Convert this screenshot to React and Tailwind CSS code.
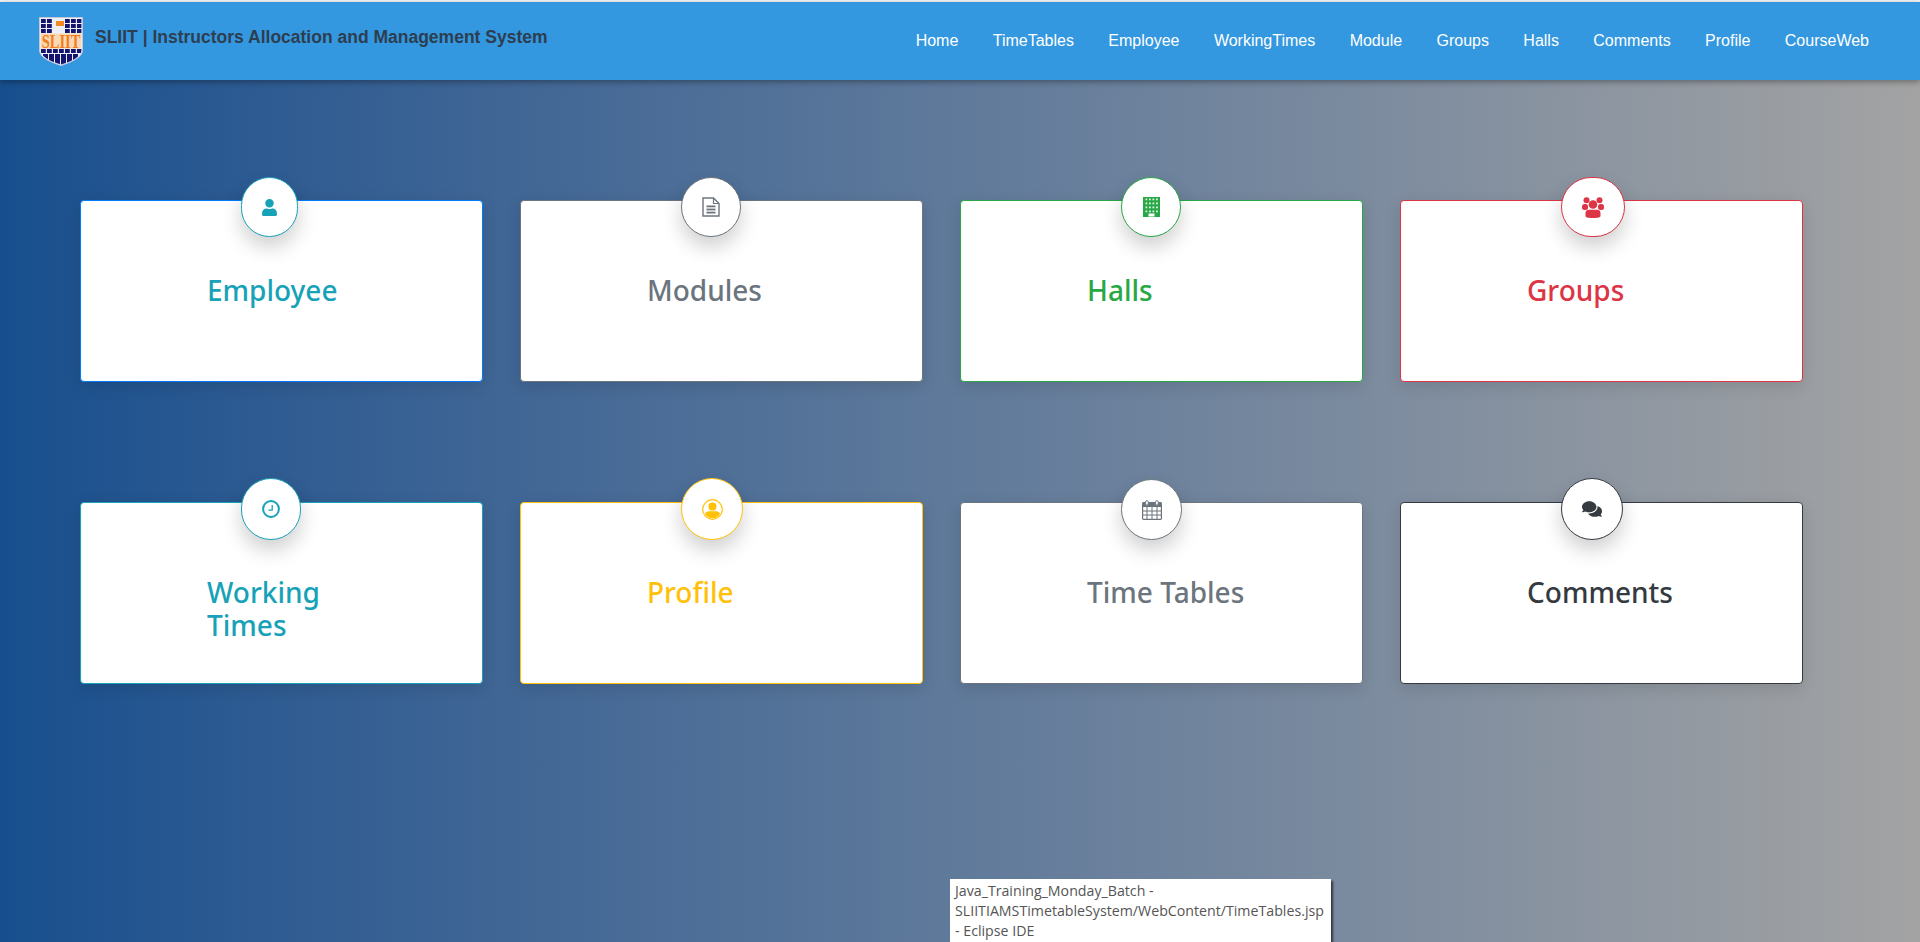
import { FaUser, FaComments } from "react-icons/fa";

const navLinks = ["Home", "TimeTables", "Employee", "WorkingTimes", "Module", "Groups", "Halls", "Comments", "Profile", "CourseWeb"];

// icons react-icons doesn't have in this shape are drawn by hand
const FileIcon = ({ className }) => (
  <svg width="18" height="20" viewBox="0 0 18 20" className={className}>
    <path d="M1 1H11.5L17 6.5V19H1Z" fill="none" stroke="currentColor" strokeWidth="1.4" />
    <path d="M11.5 1V6.5H17" fill="none" stroke="currentColor" strokeWidth="1.2" />
    <rect x="4.5" y="8.5" width="9" height="1.8" fill="currentColor" />
    <rect x="4.5" y="11.6" width="9" height="1.8" fill="currentColor" />
    <rect x="4.5" y="14.7" width="9" height="1.8" fill="currentColor" />
  </svg>
);

const BuildingIcon = ({ className }) => (
  <svg width="17" height="20" viewBox="0 0 17 20" className={className}>
    <rect width="17" height="20" fill="currentColor" />
    {[2, 6, 10, 14].map((y) =>
      [2.5, 6, 9.5, 13].map((x) => <rect key={`${x}-${y}`} x={x} y={y - 0.5} width="1.8" height="1.8" fill="#fff" fillOpacity="0.85" />)
    )}
    <rect x="5.5" y="16.5" width="6" height="3" fill="#fff" />
  </svg>
);

const GroupIcon = ({ className }) => (
  <svg width="22" height="21" viewBox="0 0 22 21" className={className}>
    <g fill="currentColor">
      <circle cx="4.5" cy="3.2" r="3" />
      <circle cx="17.5" cy="3.2" r="3" />
      <rect x="0" y="7" width="6" height="6" rx="2.5" />
      <rect x="16" y="7" width="6" height="6" rx="2.5" />
      <circle cx="11" cy="7.5" r="4.3" />
      <path d="M3.5 16C3.5 13.5 5 12.8 7 12.8H15C17 12.8 18.5 13.5 18.5 16V19C18.5 20 17 21 11 21C5 21 3.5 20 3.5 19Z" />
    </g>
  </svg>
);

const ClockIcon = ({ className }) => (
  <svg width="18" height="18" viewBox="0 0 18 18" className={className}>
    <circle cx="9" cy="9" r="7.9" fill="none" stroke="currentColor" strokeWidth="2" />
    <path d="M10.2 5V10.2H6.5" fill="none" stroke="currentColor" strokeWidth="1.3" />
  </svg>
);

const ProfileIcon = ({ className }) => (
  <svg width="21" height="21" viewBox="0 0 21 21" className={className}>
    <defs>
      <clipPath id="profile-clip">
        <circle cx="10.5" cy="10.5" r="8.7" />
      </clipPath>
    </defs>
    <circle cx="10.5" cy="10.5" r="9.8" fill="none" stroke="currentColor" strokeWidth="1.2" />
    <g fill="currentColor" clipPath="url(#profile-clip)">
      <circle cx="10.5" cy="7.6" r="4" />
      <path d="M3 21V15.5C3 13.5 5 12.3 7 12.3H14C16 12.3 18 13.5 18 15.5V21Z" />
    </g>
  </svg>
);

const CalendarIcon = ({ className }) => (
  <svg width="20" height="20" viewBox="0 0 20 20" className={className}>
    <rect x="0.6" y="2.6" width="18.8" height="16.8" rx="1" fill="#fff" stroke="currentColor" strokeWidth="1.2" />
    <rect x="0.6" y="2.6" width="18.8" height="4.4" fill="currentColor" />
    <path d="M5 7V19M10 7V19M15 7V19M1 11H19M1 15H19" stroke="currentColor" strokeWidth="1" />
    <rect x="3.6" y="0.6" width="2.6" height="4.6" rx="1.3" fill="#fff" stroke="currentColor" strokeWidth="0.9" />
    <rect x="13.6" y="0.6" width="2.6" height="4.6" rx="1.3" fill="#fff" stroke="currentColor" strokeWidth="0.9" />
  </svg>
);

const UserIcon = ({ className }) => <FaUser className={`text-[17px] ${className}`} />;
const CommentsIcon = ({ className }) => <FaComments className={`text-[20px] ${className}`} />;

// classes are written out in full so tailwind picks them up
const cards = [
  { title: "Employee", Icon: UserIcon, border: "border-[#007bff]", ring: "border-[#17a2b8]", text: "text-[#17a2b8]", circle: "w-[57px] h-[60px] -top-[24px]" },
  { title: "Modules", Icon: FileIcon, border: "border-[#6c757d]", ring: "border-[#6c757d]", text: "text-[#6c757d]", circle: "w-[60px] h-[60px] -top-[24px]" },
  { title: "Halls", Icon: BuildingIcon, border: "border-[#28a745]", ring: "border-[#28a745]", text: "text-[#28a745]", circle: "w-[60px] h-[60px] -top-[24px]" },
  { title: "Groups", Icon: GroupIcon, border: "border-[#dc3545]", ring: "border-[#dc3545]", text: "text-[#dc3545]", circle: "w-[64px] h-[60px] -top-[24px]" },
  { title: "Working Times", Icon: ClockIcon, border: "border-[#17a2b8]", ring: "border-[#17a2b8]", text: "text-[#17a2b8]", circle: "w-[60px] h-[62px] -top-[25px]" },
  { title: "Profile", Icon: ProfileIcon, border: "border-[#ffc107]", ring: "border-[#ffc107]", text: "text-[#ffc107]", circle: "w-[62px] h-[62px] -top-[25px]" },
  { title: "Time Tables", Icon: CalendarIcon, border: "border-[#6c757d]", ring: "border-[#6c757d]", text: "text-[#6c757d]", circle: "w-[61px] h-[61px] -top-[24px]" },
  { title: "Comments", Icon: CommentsIcon, border: "border-[#343a40]", ring: "border-[#343a40]", text: "text-[#343a40]", circle: "w-[62px] h-[62px] -top-[25px]" },
];

const Logo = () => (
  <svg width="44" height="49" viewBox="0 0 44 49" className="shrink-0">
    <defs>
      <clipPath id="shield">
        <path d="M1.5 1.5H42.5V33C42.5 40 32 44.5 22 47.5C12 44.5 1.5 40 1.5 33Z" />
      </clipPath>
    </defs>
    <path d="M0.5 0.5H43.5V33C43.5 41 32 45 22 48.5C12 45 0.5 41 0.5 33Z" fill="#eef0f8" stroke="#c4c6dc" />
    <g clipPath="url(#shield)">
      <g fill="#14146e">
        {[2, 8, 26, 32, 38].map((x) => [2, 7, 12].map((y) => <rect key={`${x}-${y}`} x={x} y={y} width="4.8" height="4" />))}
        {[2, 8, 14, 20, 26, 32, 38].map((x) => <rect key={`a${x}`} x={x} y="32" width="4.8" height="4" />)}
        {[4, 10, 16, 22, 28, 34].map((x) => <rect key={`b${x}`} x={x} y="37" width="5" height="12" />)}
      </g>
      <rect x="17" y="4" width="8" height="5" fill="#f08a24" />
      <rect x="1" y="16.5" width="42" height="15" fill="#fbd9b5" />
    </g>
    <text transform="translate(22 30.5) scale(1 1.3)" textAnchor="middle" fontFamily="Liberation Serif, serif" fontSize="14.5" fontWeight="700" fill="#f47b20">SLIIT</text>
  </svg>
);

const DashCard = ({ card }) => {
  const { title, Icon, border, ring, text, circle } = card;
  return (
    <div className={`relative h-[182px] rounded-[4px] border bg-white shadow-[0_4px_16px_rgba(0,0,0,0.12)] ${border}`}>
      <div className={`absolute left-[160px] flex items-center justify-center rounded-full border bg-white shadow-[0_10px_20px_rgba(0,0,0,0.19)] ${circle} ${ring}`}>
        <Icon className={text} />
      </div>
      <h2 className={`ml-[126px] mt-[73px] w-[170px] text-[28px] leading-[33px] font-medium font-['Noto_Sans',sans-serif] ${text}`}>
        {title}
      </h2>
    </div>
  );
};

const App = () => {
  return (
    <div className="relative h-[942px] w-full overflow-hidden bg-gradient-to-r from-[#174f8e] to-[#a3a3a3] font-['Liberation_Sans',sans-serif]">
      <div className="h-[2px] bg-[#f2f4f6]" />
      {/* Navbar */}
      <nav className="flex h-[78px] items-center justify-between bg-[#3498e0] pl-[39px] pr-[51px] shadow-[0_2px_6px_rgba(0,0,0,0.35)]">
        <div className="flex items-center gap-[12px]">
          <Logo />
          <span className="mb-[8px] text-[17.5px] font-bold text-[#2c3e50]">
            SLIIT | Instructors Allocation and Management System
          </span>
        </div>
        <ul className="flex gap-[34.4px] text-[16px] text-white">
          {navLinks.map((link) => (
            <li key={link}>
              <a href="#">{link}</a>
            </li>
          ))}
        </ul>
      </nav>

      {/* Cards */}
      <main className="grid grid-cols-[repeat(4,403px)] gap-x-[37px] gap-y-[120px] pl-[80px] pt-[120px]">
        {cards.map((card) => (
          <DashCard key={card.title} card={card} />
        ))}
      </main>

      {/* Windows taskbar tooltip over the page */}
      <div className="absolute left-[950px] top-[879px] h-[70px] w-[381px] bg-white pl-[5px] pt-[2px] text-[14.2px] leading-[20px] text-[#555] shadow-[2px_2px_2px_rgba(0,0,0,0.6)] font-['Open_Sans',sans-serif]">
        <div>Java_Training_Monday_Batch -</div>
        <div>SLIITIAMSTimetableSystem/WebContent/TimeTables.jsp</div>
        <div>- Eclipse IDE</div>
      </div>
    </div>
  );
};

export default App;
